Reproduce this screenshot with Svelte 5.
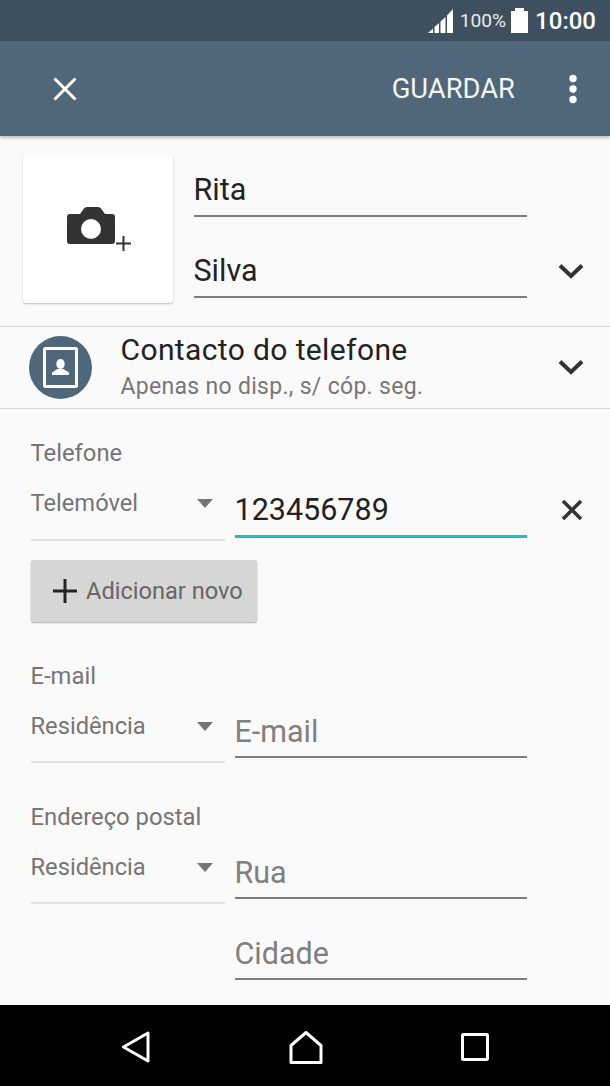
<script>
	const sections = [
		{ label: 'E-mail', type: 'Residência', fields: ['E-mail'] },
		{ label: 'Endereço postal', type: 'Residência', fields: ['Rua', 'Cidade'] }
	];
</script>

<div class="screen">
	<header>
		<div class="status">
			<svg class="signal" width="25" height="24" viewBox="0 0 25 24">
				<path d="M0 24 L5 19.500 V24 Z M6.500 24 V18 L11 14 V24 Z M12.500 24 V12.500 L17.500 8 V24 Z M19 24 V6.500 L25 0 V24 Z" fill="#fff" />
			</svg>
			<span class="pct">100%</span>
			<svg class="battery" width="17" height="25" viewBox="0 0 17 25">
				<path d="M4 0 H13 V3 H17 V25 H0 V3 H4 Z" fill="#fff" />
			</svg>
			<span class="clock">10:00</span>
		</div>
		<div class="toolbar">
			<svg class="close" width="26" height="26" viewBox="0 0 26 26">
				<path d="M2.500 2.500 L23.500 23.500 M23.500 2.500 L2.500 23.500" stroke="#fff" stroke-width="3" fill="none" />
			</svg>
			<span class="save">GUARDAR</span>
			<svg class="more" width="10" height="30" viewBox="0 0 10 30">
				<circle cx="5" cy="4.500" r="3.700" fill="#fff" />
				<circle cx="5" cy="15" r="3.700" fill="#fff" />
				<circle cx="5" cy="25.500" r="3.700" fill="#fff" />
			</svg>
		</div>
	</header>

	<main>
		<section class="names">
			<div class="photo">
				<svg width="64" height="44" viewBox="0 0 64 44">
					<path d="M3 7 H13 L17 1.500 Q18 0 20 0 H31 Q33 0 34 1.500 L38 7 H45 Q48 7 48 10 V34 Q48 37 45 37 H3 Q0 37 0 34 V10 Q0 7 3 7 Z" fill="#333" />
					<circle cx="24" cy="22" r="10" fill="#fff" />
					<path d="M49 36.500 H64 M56.500 29 V44" stroke="#333" stroke-width="2" fill="none" />
				</svg>
			</div>
			<div class="name-fields">
				<div class="field name">Rita</div>
				<div class="field name">Silva</div>
			</div>
			<svg class="chev name-chev" width="26" height="16" viewBox="0 0 26 16">
				<path d="M2 2.500 L13 13 L24 2.500" stroke="#333" stroke-width="4" fill="none" />
			</svg>
		</section>

		<section class="account">
			<div class="avatar">
				<svg width="35" height="41" viewBox="0 0 35 41">
					<rect x="1.500" y="1.500" width="32" height="38" rx="1" fill="none" stroke="#fff" stroke-width="3" />
					<ellipse cx="17.500" cy="17" rx="4.200" ry="5" fill="#fff" />
					<path d="M9 28 V25.500 L14.500 22 H20.500 L26 25.500 V28 Z" fill="#fff" />
				</svg>
			</div>
			<div class="account-text">
				<div class="account-title">Contacto do telefone</div>
				<div class="account-sub">Apenas no disp., s/ cóp. seg.</div>
			</div>
			<svg class="chev account-chev" width="26" height="16" viewBox="0 0 26 16">
				<path d="M2 2.500 L13 13 L24 2.500" stroke="#333" stroke-width="4" fill="none" />
			</svg>
		</section>

		<section class="group phone">
			<div class="label">Telefone</div>
			<div class="row">
				<div class="select">
					<span>Telemóvel</span>
					<i class="caret"></i>
				</div>
				<div class="field active">123456789</div>
				<svg class="remove" width="22" height="22" viewBox="0 0 22 22">
					<path d="M2 2 L20 20 M20 2 L2 20" stroke="#333" stroke-width="3.500" fill="none" />
				</svg>
			</div>
			<button class="add">
				<svg width="24" height="24" viewBox="0 0 24 24">
					<path d="M0 12 H24 M12 0 V24" stroke="#222" stroke-width="3" fill="none" />
				</svg>
				Adicionar novo
			</button>
		</section>

		{#each sections as s}
			<section class="group">
				<div class="label">{s.label}</div>
				<div class="row">
					<div class="select">
						<span>{s.type}</span>
						<i class="caret"></i>
					</div>
					<div class="stack">
						{#each s.fields as f}
							<div class="field hint">{f}</div>
						{/each}
					</div>
				</div>
			</section>
		{/each}
	</main>

	<nav>
		<svg width="29" height="32" viewBox="0 0 29 32">
			<path d="M27 2 L2.500 16 L27 30 Z" fill="none" stroke="#fff" stroke-width="3" stroke-linejoin="round" />
		</svg>
		<svg width="34" height="33" viewBox="0 0 34 33">
			<path d="M2 31.500 V14.500 L17 1.500 L32 14.500 V31.500 Z" fill="none" stroke="#fff" stroke-width="3" stroke-linejoin="round" />
		</svg>
		<svg width="28" height="28" viewBox="0 0 28 28">
			<rect x="1.500" y="1.500" width="25" height="25" rx="1" fill="none" stroke="#fff" stroke-width="3" />
		</svg>
	</nav>
</div>

<style>
	:global(body) {
		margin: 0;
		background: #fafafa;
	}

	.screen {
		width: 610px;
		height: 1086px;
		display: flex;
		flex-direction: column;
		overflow: hidden;
		font-family: Roboto, 'Liberation Sans', sans-serif;
		background: #fafafa;
	}

	header {
		position: relative;
		box-shadow: 0 1px 4px rgba(0, 0, 0, 0.35);
		color: #fff;
	}

	.status {
		height: 41px;
		background: #3e5060;
		display: flex;
		align-items: center;
		justify-content: flex-end;
		padding-right: 14px;
	}

	.signal {
		margin: 1px 7px 0 0;
	}

	.pct {
		font-size: 19.200px;
		margin-right: 5px;
		color: #e8ecef;
	}

	.battery {
		margin-right: 7px;
	}

	.clock {
		font-size: 24px;
		font-weight: 500;
	}

	.toolbar {
		height: 95px;
		background: #506679;
		display: flex;
		align-items: center;
		padding: 0 32px 0 52px;
	}

	.save {
		margin-left: auto;
		margin-right: 53px;
		font-size: 27.400px;
		color: #f2f4f6;
	}

	main {
		flex: 1;
		min-height: 0;
		overflow: hidden;
	}

	.names {
		height: 191px;
		box-sizing: border-box;
		padding: 18px 26px 0 23px;
		display: flex;
		align-items: flex-start;
		border-bottom: 1px solid #d4d4d4;
	}

	.photo {
		width: 150px;
		height: 149px;
		flex-shrink: 0;
		background: #fff;
		border-radius: 3px;
		box-shadow: 0 1px 2px rgba(0, 0, 0, 0.25);
		display: flex;
		align-items: center;
		justify-content: center;
	}

	.photo svg {
		margin-left: 2px;
	}

	.name-fields {
		width: 333px;
		margin-left: 21px;
		padding-top: 16px;
		flex-shrink: 0;
	}

	.field {
		border-bottom: 2px solid #7d7d7d;
		font-size: 30.500px;
		text-indent: -0.500px;
		color: #222;
		line-height: 40px;
		height: 40px;
		padding-bottom: 4px;
	}

	.name {
		padding-bottom: 5px;
		margin-bottom: 34px;
	}

	.name-chev {
		margin-left: 31px;
		margin-top: 109px;
	}

	.account {
		height: 82px;
		box-sizing: border-box;
		display: flex;
		align-items: center;
		padding: 0 26px 0 29px;
		border-bottom: 1px solid #d4d4d4;
	}

	.account-chev {
		margin-top: -1px;
	}

	.avatar {
		width: 63px;
		height: 63px;
		border-radius: 50%;
		background: #506679;
		display: flex;
		align-items: center;
		justify-content: center;
	}

	.account-text {
		flex: 1;
		margin-left: 28.500px;
	}

	.account-title {
		font-size: 30px;
		line-height: 38px;
		color: #222;
		letter-spacing: 0.38px;
	}

	.account-sub {
		font-size: 23px;
		line-height: 36px;
		color: #777;
		letter-spacing: 0.3px;
	}

	.group {
		padding: 0 0 0 30.500px;
		margin-top: 39px;
	}

	.phone {
		margin-top: 29px;
	}

	.label {
		font-size: 23.800px;
		line-height: 30px;
		color: #757575;
	}

	.row {
		display: flex;
		align-items: flex-start;
		margin-top: 17px;
	}

	.select {
		width: 194.500px;
		height: 53px;
		flex-shrink: 0;
		border-bottom: 2px solid #e2e2e2;
		display: flex;
		justify-content: space-between;
		font-size: 23.700px;
		line-height: 36px;
		color: #757575;
	}

	.phone .select {
		height: 54px;
	}

	.caret {
		width: 0;
		height: 0;
		margin: 14px 12px 0 0;
		border-left: 8px solid transparent;
		border-right: 8px solid transparent;
		border-top: 9px solid #757575;
	}

	.row .field {
		margin-left: 10px;
		margin-top: 4px;
		width: 292px;
		flex-shrink: 0;
	}

	.stack .field {
		margin-bottom: 35px;
	}

	.stack {
		width: 302px;
		flex-shrink: 0;
		margin-bottom: -35px;
	}

	.row .active {
		border-bottom: 3px solid #1fbdc9;
		margin-top: 5px;
		padding-bottom: 5px;
	}

	.hint {
		color: #808080;
	}

	.remove {
		margin: 14px 0 0 34px;
		flex-shrink: 0;
	}

	.add {
		margin-top: 19px;
		margin-left: 0.500px;
		width: 226px;
		height: 62px;
		display: flex;
		align-items: center;
		gap: 9px;
		padding: 0 0 0 22px;
		border: 0;
		border-radius: 3px;
		background: #d6d6d6;
		box-shadow: 0 1px 2px rgba(0, 0, 0, 0.3);
		font: inherit;
		font-size: 23.600px;
		color: #666;
	}

	nav {
		height: 81px;
		box-sizing: border-box;
		flex-shrink: 0;
		background: #000;
		display: flex;
		align-items: center;
		justify-content: space-between;
		padding: 3px 121px 0;
	}
</style>
